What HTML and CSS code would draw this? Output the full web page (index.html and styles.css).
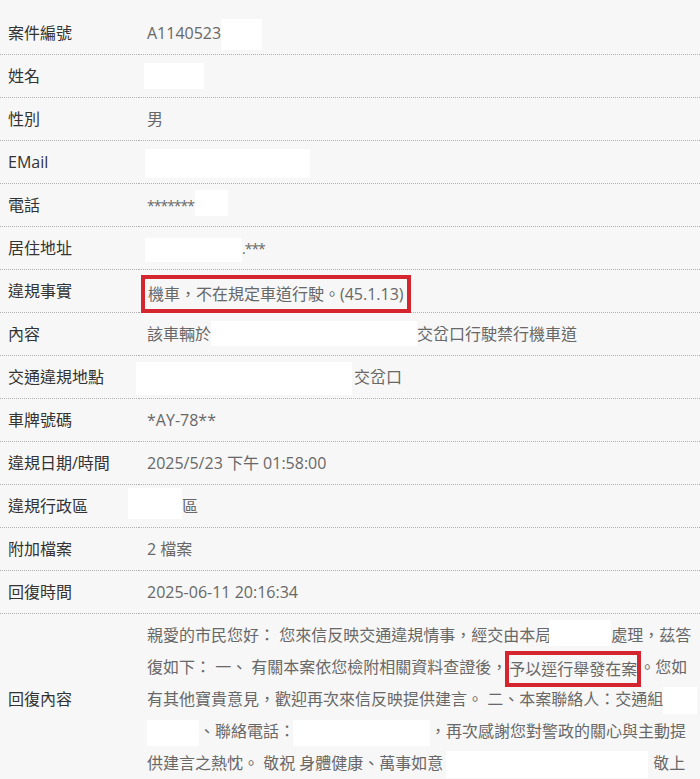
FILE: index.html
```html
<!DOCTYPE html>
<html lang="zh-Hant">
<head>
<meta charset="utf-8">
<title>案件資料</title>
<link rel="stylesheet" href="styles.css">
</head>
<body>
<div class="case">
  <div class="row"><div class="label">案件編號</div><div class="value">A1140523<span class="mask m-case"></span></div></div>
  <div class="row"><div class="label">姓名</div><div class="value"><span class="mask m-name"></span></div></div>
  <div class="row"><div class="label">性別</div><div class="value">男</div></div>
  <div class="row"><div class="label">EMail</div><div class="value"><span class="mask m-mail"></span></div></div>
  <div class="row"><div class="label">電話</div><div class="value"><span class="stars">*******</span><span class="mask m-tel"></span></div></div>
  <div class="row"><div class="label">居住地址</div><div class="value"><span class="mask m-addr"></span><span class="stars">.***</span></div></div>
  <div class="row"><div class="label">違規事實</div><div class="value"><span class="hl hl-fact">機車，不在規定車道行駛。(45.1.13)</span></div></div>
  <div class="row"><div class="label">內容</div><div class="value">該車輛於<span class="mask m-content"></span>交岔口行駛禁行機車道</div></div>
  <div class="row"><div class="label">交通違規地點</div><div class="value"><span class="mask m-place"></span>交岔口</div></div>
  <div class="row"><div class="label">車牌號碼</div><div class="value">*AY-78**</div></div>
  <div class="row"><div class="label">違規日期/時間</div><div class="value">2025/5/23 下午 01:58:00</div></div>
  <div class="row"><div class="label">違規行政區</div><div class="value"><span class="mask m-dist"></span>區</div></div>
  <div class="row"><div class="label">附加檔案</div><div class="value">2 檔案</div></div>
  <div class="row"><div class="label">回復時間</div><div class="value">2025-06-11 20:16:34</div></div>
  <div class="row row-reply"><div class="label">回復內容</div><div class="value reply">
    <span class="line">親愛的市民您好： 您來信反映交通違規情事，經交由本局<span class="mask m-r1"></span>處理，茲答</span>
    <span class="line">復如下： 一、 有關本案依您檢附相關資料查證後，<span class="hl hl-reply">予以逕行舉發在案</span>。您如</span>
    <span class="line">有其他寶貴意見，歡迎再次來信反映提供建言。 二、本案聯絡人：交通組<span class="mask m-r3"></span></span>
    <span class="line"><span class="mask m-r4a"></span>、聯絡電話：<span class="mask m-r4b"></span>，再次感謝您對警政的關心與主動提</span>
    <span class="line">供建言之熱忱。 敬祝 身體健康、萬事如意<span class="mask m-r5"></span>敬上</span>
  </div></div>
</div>
</body>
</html>
```

FILE: styles.css
```css
html, body {
  margin: 0;
  padding: 0;
  background: #f7f7f7;
}

body {
  font-family: "Open Sans", "Noto Sans CJK TC", sans-serif;
  font-size: 16px;
  overflow: hidden;
}

.case {
  padding-top: 12px;
}

.row {
  display: grid;
  grid-template-columns: 139px 1fr;
}

.label,
.value {
  padding: 5px 8px;
  height: 32px;
  line-height: 32px;
  border-bottom: 1px dotted #b0b0b0;
  white-space: nowrap;
}

.label {
  color: #333;
  display: flex;
  align-items: center;
}

.value {
  color: #686868;
}

.stars {
  font-size: 14px;
  letter-spacing: -1px;
}

.row-reply .label,
.row-reply .value {
  height: auto;
}

.reply .line {
  display: block;
  height: 32px;
}

.mask {
  display: inline-block;
  background: #fff;
  vertical-align: middle;
}

.m-case { width: 41px; height: 31px; }
.m-name { width: 60px; height: 26px; margin-left: -3px; position: relative; top: -2px; }
.m-mail { width: 165px; height: 29px; margin-left: -2px; }
.m-tel { width: 33px; height: 26px; margin-left: 1px; position: relative; top: -4px; }
.m-addr { width: 97px; height: 24px; margin-left: -2px; }
.m-content { width: 206px; height: 25px; position: relative; top: -2px; }
.m-place { width: 216px; height: 33px; margin-left: -11px; margin-right: 2px; }
.m-dist { width: 54px; height: 31px; margin-left: -19px; position: relative; top: -4px; }
.m-r1 { width: 62px; height: 26px; margin-left: -2px; position: relative; top: -4px; }
.m-r3 { width: 34px; height: 27px; }
.m-r4a { width: 52px; height: 26px; }
.m-r4b { width: 137px; height: 26px; margin-left: -2px; }
.m-r5 { width: 202px; height: 27px; margin-left: 3px; margin-right: 5px; }

.hl {
  display: inline-block;
  border: 4px solid #d5262f;
  line-height: 28px;
  vertical-align: middle;
}

.hl-fact {
  padding: 0 3px;
  margin-left: -6px;
  line-height: 30px;
}

.hl-reply {
  margin: 0 -2px 0 -2px;
}
```
